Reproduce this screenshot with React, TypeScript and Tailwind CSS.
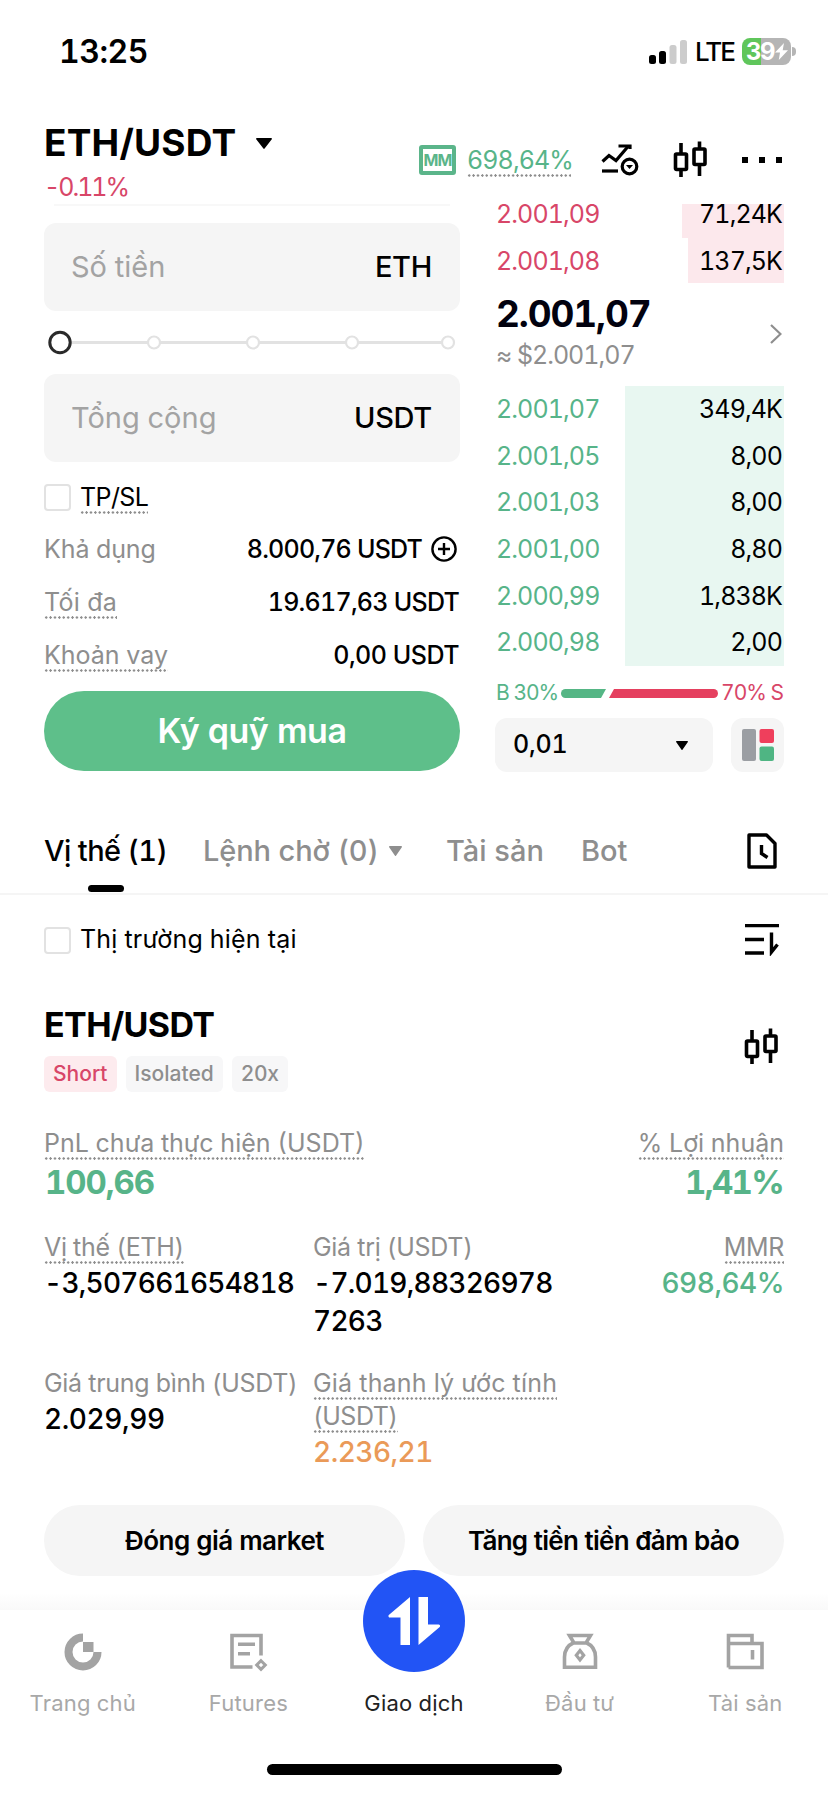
import React from 'react';

const asks = [
  { price: '2.001,09', size: '71,24K', depth: 102 },
  { price: '2.001,08', size: '137,5K', depth: 96 },
];

const bids = [
  { price: '2.001,07', size: '349,4K' },
  { price: '2.001,05', size: '8,00' },
  { price: '2.001,03', size: '8,00' },
  { price: '2.001,00', size: '8,80' },
  { price: '2.000,99', size: '1,838K' },
  { price: '2.000,98', size: '2,00' },
];

const CandleIcon = () => (
  <svg width="36" height="38" viewBox="0 0 36 38" fill="none" stroke="#000" strokeWidth="3.6">
    <rect x="2.5" y="13" width="11" height="15.5" rx="1" />
    <path d="M8 2v11M8 28.5V36" />
    <rect x="21" y="8" width="11" height="15.5" rx="1" />
    <path d="M26.5 .5V8M26.5 23.5V35" />
  </svg>
);

const Caret = ({ className = '', width = 16, height = 11 }: { className?: string; width?: number; height?: number }) => (
  <svg className={className} width={width} height={height} viewBox="0 0 16 11" preserveAspectRatio="none">
    <path d="M.8 0h14.4a.8.8 0 0 1 .6 1.3L8.6 10.6a.8.8 0 0 1-1.2 0L.2 1.3A.8.8 0 0 1 .8 0Z" fill="currentColor" />
  </svg>
);

// dotted underline used for labels that open a hint
const Hint = ({ children, className = '' }: { children: React.ReactNode; className?: string }) => (
  <span
    className={`inline-block bg-[radial-gradient(circle,#8e8e8e_1px,transparent_1.4px)] bg-[length:4.4px_3px] bg-bottom-left bg-repeat-x ${className}`}
  >
    {children}
  </span>
);

const Checkbox = () => <span className="block h-[27px] w-[27px] shrink-0 rounded-[4px] border-2 border-[#e2e2e2]" />;

const StatusBar = () => (
  <div className="flex h-[103px] items-center justify-between pl-[59px] pr-[32px]">
    <span className="text-[32px] font-semibold leading-[38px] tracking-[-0.5px]">13:25</span>
    <div className="flex items-center">
      <svg width="38" height="24" viewBox="0 0 38 24">
        <rect x="0" y="15" width="7" height="9" rx="2.5" fill="#000" />
        <rect x="10" y="11" width="7" height="13" rx="2.5" fill="#000" />
        <rect x="20.5" y="5" width="7" height="19" rx="2.5" fill="#ccc" />
        <rect x="31" y="0" width="7" height="24" rx="2.5" fill="#ccc" />
      </svg>
      <span className="ml-[8px] w-[40px] text-[26px] font-medium leading-[30px] tracking-[-2px]">LTE</span>
      <div className="relative ml-[7px] flex h-[27px] w-[49px] items-center overflow-hidden rounded-[8px] bg-[linear-gradient(90deg,#5fc65b_39%,#b5b5b5_39%)] pl-[4px] text-white">
        <span className="text-[24px] font-bold leading-[27px] tracking-[-1.4px]">39</span>
        <svg className="absolute right-[3px] top-[5px]" width="13" height="17" viewBox="0 0 13 17">
          <path d="M9 0 0 9.5h5L3.8 17 13 7.3H7.7Z" fill="#fff" />
        </svg>
      </div>
      <span className="ml-[1px] h-[9px] w-[4px] rounded-r-full bg-[#b5b5b5]" />
    </div>
  </div>
);

const Header = () => (
  <header className="flex h-[101px] justify-between pl-[44px] pr-[46px]">
    <div className="pt-[18px]">
      <div className="flex items-center">
        <h1 className="w-[194px] whitespace-nowrap text-[37px] font-bold leading-[44px] tracking-[0.2px]">ETH/USDT</h1>
        <Caret className="ml-[18px]" />
      </div>
      <div className="mt-[7px] text-[25px] leading-[30px] tracking-[-2px] text-[#d84668]">-0.11%</div>
    </div>
    <div className="mt-[35px] flex h-[44px] items-center">
      <div className="flex h-[30px] w-[37px] items-center justify-center rounded-[3px] border-4 border-[#5bb58a] text-[16px] font-bold leading-none tracking-[-0.8px] text-[#5bb58a]">
        MM
      </div>
      <Hint className="ml-[11px] h-[33px] w-[104px] whitespace-nowrap text-[25px] leading-[33px] tracking-[-0.9px] text-[#57b489]">
        698,64%
      </Hint>
      <svg className="ml-[30px]" width="38" height="32" viewBox="0 0 38 32" fill="none" stroke="#000" strokeWidth="3.2">
        <path d="m1.5 17.5 6.5-6 7 5L27 2.5" />
        <path d="M17.5 2H29v3" />
        <path d="M1 27h16" />
        <circle cx="28.5" cy="22.5" r="7.3" />
        <path d="M25 21h7l-3.5 4Z" fill="#000" stroke="none" />
      </svg>
      <div className="ml-[34px]">
        <CandleIcon />
      </div>
      <div className="ml-[33px] flex gap-[11px]">
        <span className="h-[6px] w-[6px] bg-black" />
        <span className="h-[6px] w-[6px] bg-black" />
        <span className="h-[6px] w-[6px] bg-black" />
      </div>
    </div>
  </header>
);

const AmountField = ({ label, unit }: { label: string; unit: string }) => (
  <div className="flex h-[88px] items-center justify-between rounded-[12px] bg-[#f5f5f5] pl-[27px] pr-[28px] text-[29px]">
    <span className="text-[#a3a3a3]">{label}</span>
    <span className="font-medium tracking-[-0.3px]">{unit}</span>
  </div>
);

const PercentSlider = () => (
  <svg className="mt-[18px] mb-[17px]" width="416" height="28" viewBox="0 0 416 28" fill="#fff">
    <path d="M16 13.5h392" stroke="#e2e2e2" strokeWidth="3" />
    {[110, 209, 308, 404].map((x) => (
      <circle key={x} cx={x} cy="13.5" r="6" stroke="#e2e2e2" strokeWidth="2.2" />
    ))}
    <circle cx="16" cy="13.5" r="10.2" stroke="#2a2a2a" strokeWidth="3" />
  </svg>
);

const OrderForm = () => (
  <div className="w-[416px]">
    <div className="ml-[10px] h-[2px] w-[396px] bg-[#f8f8f8]" />
    <div className="h-[17px]" />
    <AmountField label="Số tiền" unit="ETH" />
    <PercentSlider />
    <AmountField label="Tổng cộng" unit="USDT" />
    <div className="mt-[17px] flex h-[36px] items-center gap-[9px]">
      <Checkbox />
      <Hint className="h-[33px] text-[25px] leading-[33px] tracking-[-0.6px]">TP/SL</Hint>
    </div>
    <div className="mt-[15px] flex h-[38px] items-center justify-between text-[25px] leading-[38px]">
      <span className="tracking-[-0.1px] text-[#8e8e8e]">Khả dụng</span>
      <span className="flex items-center font-medium tracking-[-0.8px]">
        8.000,76 USDT
        <svg className="ml-[9px] mr-[3px]" width="26" height="26" viewBox="0 0 26 26" fill="none" stroke="#000" strokeWidth="2.4">
          <circle cx="13" cy="13" r="11.6" />
          <path d="M13 7v12M7 13h12" />
        </svg>
      </span>
    </div>
    <div className="mt-[15px] flex h-[38px] items-center justify-between text-[25px] leading-[38px]">
      <Hint className="h-[33px] leading-[33px] tracking-[0.3px] text-[#8e8e8e]">Tối đa</Hint>
      <span className="pr-[1px] font-medium tracking-[-0.75px]">19.617,63 USDT</span>
    </div>
    <div className="mt-[15px] flex h-[38px] items-center justify-between text-[25px] leading-[38px]">
      <Hint className="h-[33px] leading-[33px] text-[#8e8e8e]">Khoản vay</Hint>
      <span className="pr-[1px] font-medium tracking-[-0.5px]">0,00 USDT</span>
    </div>
    <button className="mt-[17px] flex h-[80px] w-full items-center justify-center rounded-full bg-[#5ebf8a] text-[34px] font-semibold leading-[40px] tracking-[-0.5px] text-white">
      Ký quỹ mua
    </button>
  </div>
);

const OrderBook = () => (
  <div className="w-[289px] text-[25px] tracking-[-0.9px]">
    {asks.map((row, i) => (
      <div key={row.price} className={`flex justify-between pl-px ${i === 0 ? 'h-[34px] leading-[20px]' : 'h-[45px] leading-[46px]'}`}>
        <span className="text-[#d84668]">{row.price}</span>
        <span className="bg-[#fce8ec] pr-[2px] text-right" style={{ width: row.depth }}>
          {row.size}
        </span>
      </div>
    ))}
    <div className="flex h-[103px] items-start justify-between pt-[9px] pl-px pr-[2px]">
      <div>
        <div className="text-[37px] font-bold leading-[43px] tracking-[-1.1px] text-[#02020f]">2.001,07</div>
        <div className="text-[25px] leading-[40px] tracking-[-1px] text-[#8e8e8e]">≈ $2.001,07</div>
      </div>
      <svg className="mt-[32px]" width="12" height="20" viewBox="0 0 12 20" fill="none" stroke="#8e8e8e" strokeWidth="2.2">
        <path d="m1 1 9.5 9L1 19" />
      </svg>
    </div>
    {bids.map((row) => (
      <div key={row.price} className="flex h-[46.7px] justify-between pl-px leading-[47px]">
        <span className="text-[#57b489]">{row.price}</span>
        <span className="w-[159px] bg-[#e8f7f1] pr-[2px] text-right">{row.size}</span>
      </div>
    ))}
    <div className="mt-[14px] flex h-[26px] items-center pl-px text-[21px] leading-[26px] tracking-[-1px]">
      <span className="w-[65px] text-[#57b489]">B 30%</span>
      <svg width="157" height="9" viewBox="0 0 157 9">
        <path d="M4.5 0H45l-5 9H4.5a4.5 4.5 0 0 1 0-9Z" fill="#55b685" />
        <path d="M53 0h99.5a4.5 4.5 0 0 1 0 9H48Z" fill="#e5405f" />
      </svg>
      <span className="flex-1 whitespace-nowrap pr-[1px] text-right text-[#d84668]">70% S</span>
    </div>
    <div className="mt-[12px] flex justify-between">
      <div className="flex h-[54px] w-[218px] items-center justify-between rounded-[12px] bg-[#f5f5f5] pl-[18px] pr-[25px] font-medium tracking-[-0.2px]">
        0,01
        <Caret width={12} height={9} />
      </div>
      <div className="flex h-[54px] w-[53px] items-center justify-center rounded-[12px] bg-[#f5f5f5]">
        <svg width="32" height="32" viewBox="0 0 32 32">
          <rect width="14" height="32" rx="2" fill="#9b9ea3" />
          <rect x="17.5" width="14.5" height="14" rx="2" fill="#ef3f5c" />
          <rect x="17.5" y="17.5" width="14.5" height="14.5" rx="2" fill="#4fb583" />
        </svg>
      </div>
    </div>
  </div>
);

const Tabs = () => (
  <div className="mt-[57px] flex h-[66px] justify-between border-b-2 border-[#f5f5f5] pl-[44px] pr-[51px] text-[29px] leading-[44px]">
    <div className="flex font-medium text-[#8e8e8e]">
      <div className="flex h-[66px] w-[159px] flex-col text-black">
        <span className="whitespace-nowrap tracking-[-0.6px]">Vị thế (1)</span>
        <span className="ml-[44px] mt-[12px] h-[7px] w-[36px] rounded-full bg-black" />
      </div>
      <div className="flex h-[44px] w-[243px] items-center whitespace-nowrap tracking-[-0.1px]">
        Lệnh chờ (0)
        <Caret className="ml-[10px]" width={13} height={10} />
      </div>
      <span className="w-[135px]">Tài sản</span>
      <span>Bot</span>
    </div>
    <svg className="mt-[4px]" width="30" height="36" viewBox="0 0 30 36" fill="none" stroke="#000" strokeWidth="3.4">
      <path d="M2 2h17.5L28 10.5V34H2Z" strokeLinejoin="round" />
      <path d="M14.5 12v8.5l6 4" />
    </svg>
  </div>
);

interface StatProps {
  label: string;
  value: string;
  hint?: boolean;
  className?: string;
}

const Stat = ({ label, value, hint = false, className = 'tracking-[-0.4px]' }: StatProps) => (
  <div className={className}>
    <div className="h-[33px] whitespace-nowrap text-[25px] font-normal leading-[33px] tracking-[-0.3px] text-[#8e8e8e]">
      {hint ? <Hint className="h-[33px]">{label}</Hint> : label}
    </div>
    <div>{value}</div>
  </div>
);

const Position = () => (
  <section className="px-[44px]">
    <div className="mt-[30px] flex h-[30px] items-center justify-between pr-[4px]">
      <div className="flex items-center gap-[9px] text-[25px] tracking-[0.2px]">
        <Checkbox />
        Thị trường hiện tại
      </div>
      <svg width="36" height="32" viewBox="0 0 36 32" fill="none" stroke="#000" strokeWidth="3.4">
        <path d="M1 1.5h34M1 15.5h19M1 29h19M27.5 8.5V28l6-7.5" />
      </svg>
    </div>
    <div className="mt-[48px] flex justify-between pr-[4px]">
      <div>
        <h2 className="text-[34px] font-bold leading-[44px] tracking-[-0.6px]">ETH/USDT</h2>
        <div className="mt-[9px] flex gap-[9px] text-[21px] font-medium leading-[36px] text-[#8e8e8e]">
          <span className="rounded-[6px] bg-[#fdebee] px-[9px] text-[#d84668]">Short</span>
          <span className="rounded-[6px] bg-[#f7f7f8] px-[9px]">Isolated</span>
          <span className="rounded-[6px] bg-[#f7f7f8] px-[9px] tracking-[-0.3px]">20x</span>
        </div>
      </div>
      <div className="mt-[25px]">
        <CandleIcon />
      </div>
    </div>
    <div className="mt-[35px] flex justify-between text-[33px] font-bold leading-[44px] text-[#57b489]">
      <div>
        <div className="h-[33px] text-[25px] font-normal leading-[33px] text-[#8e8e8e]">
          <Hint className="h-[33px]">PnL chưa thực hiện (USDT)</Hint>
        </div>
        <div className="pl-px tracking-[-1.1px]">100,66</div>
      </div>
      <div className="text-right">
        <div className="h-[33px] text-[25px] font-normal leading-[33px] text-[#8e8e8e]">
          <Hint className="h-[33px]">% Lợi nhuận</Hint>
        </div>
        <div className="pr-px tracking-[-1.7px]">1,41%</div>
      </div>
    </div>
    <div className="mt-[27px] grid grid-cols-[269px_263px_1fr] text-[28px] font-medium leading-[38px]">
      <Stat hint label="Vị thế (ETH)" value="-3,507661654818" className="tracking-[-0.75px]" />
      <Stat label="Giá trị (USDT)" value="-7.019,88326978 7263" className="tracking-[-0.75px]" />
      <Stat hint label="MMR" value="698,64%" className="text-right tracking-[-0.5px] text-[#57b489]" />
    </div>
    <div className="mt-[27px] grid grid-cols-[269px_263px_1fr] text-[28px] font-medium leading-[38px]">
      <Stat label="Giá trung bình (USDT)" value="2.029,99" />
      <div className="tracking-[-0.5px] text-[#ea9a58]">
        <div className="text-[25px] font-normal leading-[33px] text-[#8e8e8e]">
          <Hint className="block h-[33px] w-fit whitespace-nowrap tracking-[0.2px]">Giá thanh lý ước tính</Hint>
          <Hint className="block h-[33px] w-fit">(USDT)</Hint>
        </div>
        <div>2.236,21</div>
      </div>
    </div>
    <div className="mt-[34px] grid grid-cols-2 gap-[18px] text-[26px] font-semibold leading-[71px]">
      <button className="h-[71px] rounded-full bg-[#f5f5f5] tracking-[-0.5px]">Đóng giá market</button>
      <button className="h-[71px] rounded-full bg-[#f5f5f5] tracking-[-0.7px]">Tăng tiền tiền đảm bảo</button>
    </div>
  </section>
);

const navItems = [
  {
    label: 'Trang chủ',
    icon: (
      <>
        <path d="M20 5.5A14.5 14.5 0 1 0 34.5 20" strokeWidth="8" />
        <path d="M20 10h10.5v10H20Z" fill="#a3a3a3" stroke="none" />
      </>
    ),
  },
  {
    label: 'Futures',
    icon: (
      <>
        <path d="M33 23.5V3.5H4V35h20.5M10 12.3H27M10 21.7H22" />
        <path d="m33 28.7 4.3 4.3-4.3 4.3-4.3-4.3Z" strokeWidth="3" />
      </>
    ),
  },
  { label: 'Giao dịch', icon: null },
  {
    label: 'Đầu tư',
    icon: (
      <>
        <path d="m9.5 3.5 4.5 7.5h12l4.5-7.5ZM14 10.5C7.5 13.5 4.5 18.5 4.5 25v10.3h31V25c0-6.5-3-11.5-9.5-14.5" />
        <path d="m20 18.5 3.7 4.7L20 28l-3.7-4.8Z" strokeWidth="3.2" />
      </>
    ),
  },
  {
    label: 'Tài sản',
    icon: (
      <>
        <path d="M3.5 35.5V3.5H27v8M3.5 11.5H37v24H3.5" />
        <path d="M27.5 18v9.5" />
      </>
    ),
  },
];

const BottomNav = () => (
  <nav>
    <div className="h-[34px] bg-linear-to-b from-white/0 from-50% to-[#f9f9f9]" />
    <div className="flex h-[183px] flex-col justify-between bg-white pb-[18px]">
      <div className="grid grid-cols-5">
        {navItems.map((item) => (
          <div key={item.label} className="flex flex-col items-center">
            {item.icon ? (
              <svg className="mt-[22px]" width="40" height="40" viewBox="0 0 40 40" fill="none" stroke="#a3a3a3" strokeWidth="3.6">
                {item.icon}
              </svg>
            ) : (
              <div className="-mt-[40px] flex h-[102px] w-[102px] items-center justify-center rounded-full bg-[#2254f5]">
                <svg width="52" height="48" viewBox="0 0 52 48" fill="#fff">
                  <path d="M22 0v48h-9.5V20.5H2A1.5 1.5 0 0 1 .8 18Z" />
                  <path d="M30.5 48V0H40v27.5h10.5a1.5 1.5 0 0 1 1.2 2.5Z" />
                </svg>
              </div>
            )}
            <span className={`mt-[17px] text-[22px] leading-[28px] tracking-[0.2px] ${item.icon ? 'text-[#a8a8a8]' : 'text-[#222]'}`}>
              {item.label}
            </span>
          </div>
        ))}
      </div>
      <div className="mx-auto h-[11px] w-[295px] rounded-full bg-black" />
    </div>
  </nav>
);

export default function App() {
  return (
    <div className="h-[1793px] w-[828px] overflow-hidden bg-white font-['Inter','Noto_Sans',sans-serif] text-black tabular-nums">
      <StatusBar />
      <Header />
      <main className="flex justify-between pl-[44px] pr-[44px]">
        <OrderForm />
        <OrderBook />
      </main>
      <Tabs />
      <Position />
      <BottomNav />
    </div>
  );
}
